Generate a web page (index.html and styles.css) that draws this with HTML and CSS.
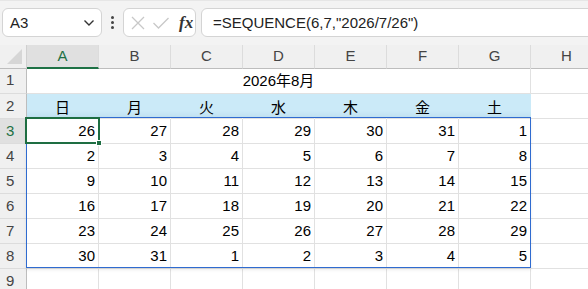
FILE: index.html
```html
<!DOCTYPE html>
<html lang="ja">
<head>
  <meta charset="UTF-8" />
  <title>SEQUENCE calendar</title>
  <link rel="stylesheet" href="styles.css">
</head>
<body>

  <div class="toolbar">
    <div class="name-box">
      <span>A3</span>
      <svg class="chevron" width="12" height="8" viewBox="0 0 12 8"><path d="M1.5 1.5 L6 6 L10.5 1.5" fill="none" stroke="#333" stroke-width="1.4"/></svg>
    </div>
    <div class="dots"><i></i><i></i><i></i></div>
    <div class="fx-box">
      <svg width="16" height="16" viewBox="0 0 16 16"><path d="M2 2 L14 14 M14 2 L2 14" stroke="#c8c8c8" stroke-width="1.3" fill="none"/></svg>
      <svg width="18" height="16" viewBox="0 0 18 16"><path d="M1.5 8 L6.5 13 L16.5 3" stroke="#c8c8c8" stroke-width="1.3" fill="none"/></svg>
      <span class="fx">fx</span>
    </div>
    <div class="formula">=SEQUENCE(6,7,"2026/7/26")</div>
  </div>

  <div class="sheet">
    <div class="head-row">
      <div class="corner"><span class="tri"></span></div>
      <div class="col-head active">A</div>
      <div class="col-head">B</div>
      <div class="col-head">C</div>
      <div class="col-head">D</div>
      <div class="col-head">E</div>
      <div class="col-head">F</div>
      <div class="col-head">G</div>
      <div class="col-head">H</div>
    </div>

    <div class="row first">
      <div class="row-head">1</div>
      <div class="cell title">2026年8月</div>
      <div class="cell"></div>
    </div>

    <div class="row">
      <div class="row-head">2</div>
      <div class="cell wday">日</div>
      <div class="cell wday">月</div>
      <div class="cell wday">火</div>
      <div class="cell wday">水</div>
      <div class="cell wday">木</div>
      <div class="cell wday">金</div>
      <div class="cell wday">土</div>
      <div class="cell"></div>
    </div>

    <div class="row">
      <div class="row-head active">3</div>
      <div class="cell num">26</div><div class="cell num">27</div><div class="cell num">28</div><div class="cell num">29</div><div class="cell num">30</div><div class="cell num">31</div><div class="cell num">1</div><div class="cell"></div>
    </div>

    <div class="row">
      <div class="row-head">4</div>
      <div class="cell num">2</div><div class="cell num">3</div><div class="cell num">4</div><div class="cell num">5</div><div class="cell num">6</div><div class="cell num">7</div><div class="cell num">8</div><div class="cell"></div>
    </div>

    <div class="row">
      <div class="row-head">5</div>
      <div class="cell num">9</div><div class="cell num">10</div><div class="cell num">11</div><div class="cell num">12</div><div class="cell num">13</div><div class="cell num">14</div><div class="cell num">15</div><div class="cell"></div>
    </div>

    <div class="row">
      <div class="row-head">6</div>
      <div class="cell num">16</div><div class="cell num">17</div><div class="cell num">18</div><div class="cell num">19</div><div class="cell num">20</div><div class="cell num">21</div><div class="cell num">22</div><div class="cell"></div>
    </div>

    <div class="row">
      <div class="row-head">7</div>
      <div class="cell num">23</div><div class="cell num">24</div><div class="cell num">25</div><div class="cell num">26</div><div class="cell num">27</div><div class="cell num">28</div><div class="cell num">29</div><div class="cell"></div>
    </div>

    <div class="row">
      <div class="row-head">8</div>
      <div class="cell num">30</div><div class="cell num">31</div><div class="cell num">1</div><div class="cell num">2</div><div class="cell num">3</div><div class="cell num">4</div><div class="cell num">5</div><div class="cell"></div>
    </div>

    <div class="row">
      <div class="row-head">9</div>
      <div class="cell"></div><div class="cell"></div><div class="cell"></div><div class="cell"></div><div class="cell"></div><div class="cell"></div><div class="cell"></div><div class="cell"></div>
    </div>

    <!-- spill range outline and active cell -->
    <div class="spill"></div>
    <div class="active-cell"><span class="handle"></span></div>
  </div>

</body>
</html>
```

FILE: styles.css
```css
* {
  box-sizing: border-box;
  margin: 0;
  padding: 0;
}

body {
  font-family: 'Liberation Sans', Arial, 'Noto Sans CJK JP', sans-serif;
  font-size: 15px;
  color: #000;
  background: #fff;
}

.toolbar {
  height: 45px;
  background: #f3f3f3;
  border-top: 1px solid #e6e6e6;
  display: flex;
  align-items: flex-start;
  padding: 7px 0 0 2px;
}

.name-box {
  width: 100px;
  height: 29px;
  background: #fff;
  border: 1px solid #d4d4d4;
  border-radius: 6px;
  display: flex;
  align-items: center;
  justify-content: space-between;
  padding: 0 6px 0 7px;
  color: #222;
}

.dots {
  width: 21px;
  height: 29px;
  display: flex;
  flex-direction: column;
  align-items: center;
  justify-content: center;
  gap: 2px;
}

.dots i {
  width: 3px;
  height: 3px;
  background: #444;
  border-radius: 50%;
}

.fx-box {
  width: 73px;
  height: 29px;
  background: #fff;
  border: 1px solid #d4d4d4;
  border-radius: 6px;
  display: flex;
  align-items: center;
  gap: 6px;
  padding-left: 6px;
}

.fx {
  font-family: 'Liberation Serif', 'Times New Roman', serif;
  font-style: italic;
  font-weight: bold;
  font-size: 17px;
  color: #333;
  margin-left: 3px;
}

.formula {
  flex: 1;
  height: 29px;
  margin-left: 5px;
  margin-right: -10px;
  background: #fff;
  border: 1px solid #d4d4d4;
  border-radius: 6px;
  padding: 5px 0 0 11px;
  color: #222;
}

.sheet {
  position: relative;
  width: 603px;
}

.head-row,
.row {
  display: grid;
  grid-template-columns: 27px repeat(8, 72px);
  height: 25px;
}

.head-row {
  height: 23px;
}

.row.first {
  height: 26px;
}

.corner {
  background: #f0f0f0;
  border-right: 1px solid #d0d0d0;
  border-bottom: 1px solid #bdbdbd;
  position: relative;
}

.corner .tri {
  position: absolute;
  right: 4px;
  bottom: 4px;
  width: 0;
  height: 0;
  border-left: 15px solid transparent;
  border-bottom: 15px solid #d6d6d6;
}

.col-head {
  background: #f0f0f0;
  border-right: 1px solid #dcdcdc;
  border-bottom: 1px solid #bdbdbd;
  color: #444;
  text-align: center;
  line-height: 22px;
}

.col-head.active {
  background: #e0e0e0;
  color: #1e7145;
  border-bottom: 2px solid #1e7145;
}

.row-head {
  background: #f0f0f0;
  border-right: 1px solid #bdbdbd;
  border-bottom: 1px solid #dcdcdc;
  color: #444;
  padding-left: 6px;
  line-height: 24px;
}

.row-head.active {
  background: #e0e0e0;
  color: #1e7145;
}

.cell {
  border-right: 1px solid #e1e1e1;
  border-bottom: 1px solid #e1e1e1;
  line-height: 24px;
}

.title {
  grid-column: span 7;
  text-align: center;
  line-height: 25px;
}

.wday {
  background: linear-gradient(#cbeaf8 70%, #bfe0f0);
  border-right-color: transparent;
  text-align: center;
  font-family: 'Noto Sans CJK JP', sans-serif;
  line-height: 22px;
  padding-top: 2px;
}

.num {
  text-align: right;
  padding-right: 3px;
}

.spill {
  position: absolute;
  left: 26px;
  top: 72px;
  width: 505px;
  height: 151px;
  border: 1px solid #2f6bd0;
  box-shadow: 0 2px 3px rgba(0, 0, 0, 0.08);
  pointer-events: none;
}

.active-cell {
  position: absolute;
  left: 25px;
  top: 72px;
  width: 75px;
  height: 27px;
  border: 2px solid #1e6e42;
}

.active-cell .handle {
  position: absolute;
  right: -4px;
  bottom: -4px;
  width: 6px;
  height: 6px;
  background: #1e6e42;
  border: 1px solid #fff;
}
```
